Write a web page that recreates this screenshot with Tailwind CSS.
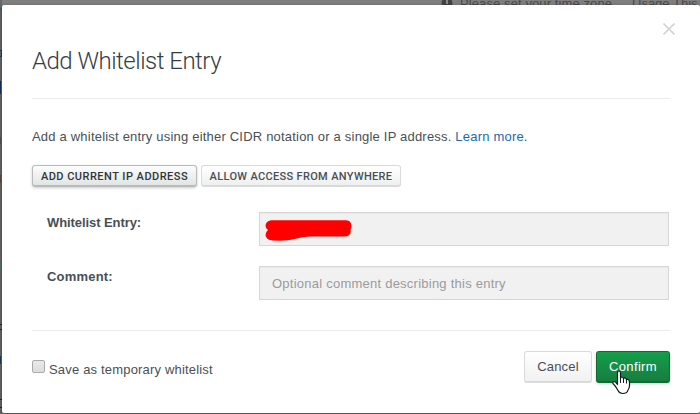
<!DOCTYPE html>
<html lang="en">
<head>
<meta charset="utf-8">
<title>Add Whitelist Entry</title>
<script src="https://cdn.jsdelivr.net/npm/@tailwindcss/browser@4"></script>
</head>
<body class="relative h-[414px] w-[700px] overflow-hidden bg-[#7e7e7e] pt-[5px] pl-[2px] font-['Liberation_Sans',Arial,sans-serif] text-[13px] text-[#494f54]">
  <!-- Dimmed page behind the dialog -->
  <div class="absolute top-0 left-0 h-[12px] w-[700px] text-[#494949]">
    <svg class="absolute top-[-2px] left-[441px]" width="12" height="10" viewBox="0 0 12 10"><circle cx="6" cy="5" r="5.500" fill="#424242"/><path d="M6 2v4" stroke="#888" stroke-width="2"/></svg>
    <span class="absolute top-[-4px] left-[460px] leading-[15px] whitespace-nowrap tracking-[0.1px]">Please set your time zone</span>
    <span class="absolute top-[-4px] left-[632px] leading-[15px] whitespace-nowrap">Usage This</span>
  </div>
  <div class="absolute top-0 left-0 h-[414px] w-[2px] overflow-hidden bg-[#666]">
    <i class="absolute top-[8px] left-0 h-[2px] w-[2px] bg-[#3b607c]"></i>
    <i class="absolute top-[50px] left-0 h-[7px] w-[2px] border border-l-0 border-[#17455f]"></i>
    <i class="absolute top-[81px] left-0 h-[13px] w-px bg-[#182f60]"></i>
    <i class="absolute top-[137px] left-0 h-[7px] w-px bg-[#57504c]"></i>
    <i class="absolute top-[175px] left-0 h-[8px] w-px bg-[#574a40]"></i>
    <i class="absolute top-[262px] left-0 h-[7px] w-px bg-[#58706d]"></i>
    <i class="absolute top-[324px] left-0 h-[6px] w-[2px] border-y border-[#17252c]"></i>
    <i class="absolute top-[356px] left-0 h-[8px] w-px bg-[#1d3a50]"></i>
    <i class="absolute top-[399px] left-0 h-[9px] w-[2px] border-y border-[#222]"></i>
  </div>

  <main class="relative flex h-[408px] w-[698px] flex-col rounded-[2px] bg-white px-[30px] shadow-[0_1px_3px_rgba(0,0,0,0.5)]">
    <button class="absolute top-[18px] right-[25px]" aria-label="Close">
      <svg width="12" height="12" viewBox="0 0 12 12" fill="none" stroke="#d4d4d4" stroke-width="1.600"><path d="M.5.5l11 11M11.500.5l-11 11"/></svg>
    </button>
    <header class="h-[94px] border-b border-[#ebebeb] pt-[41px]">
      <h1 class="font-['Roboto'] text-[24px] leading-[30px] font-light tracking-[-0.5px] whitespace-nowrap text-[#363d42]">Add Whitelist Entry</h1>
    </header>
    <p class="mt-[29px] h-[18px] leading-[18px] tracking-[0.2px] whitespace-nowrap">Add a whitelist entry using either CIDR notation or a single IP address. <a class="text-[#196bb0]">Learn more</a>.</p>
    <div class="mt-[19px] flex h-[22px] gap-1 font-['Roboto'] text-[11px] leading-[20px] font-medium whitespace-nowrap">
      <button class="w-[165px] rounded-[3px] border border-b-2 border-[#b7bcbb] bg-linear-to-b from-[#fcfdfd] to-[#e1e5e4] pt-px tracking-[0.48px] text-[#303538] shadow-[0_1px_3px_rgba(0,0,0,0.2)]">ADD CURRENT IP ADDRESS</button>
      <button class="w-[200px] rounded-[3px] border border-b-2 border-[#d8dbda] bg-linear-to-b from-white to-[#eef0ef] pt-px tracking-[0.33px] text-[#494f54]">ALLOW ACCESS FROM ANYWHERE</button>
    </div>
    <section class="mt-[25px] flex flex-col gap-5">
      <div class="flex h-[34px]">
        <label class="w-[227px] pl-[15px] leading-[22px] font-bold tracking-[-0.08px]">Whitelist Entry:</label>
        <div class="h-[34px] w-[410px] border border-[#d6d6d6] bg-[#f1f1f1] shadow-[inset_0_1px_1px_rgba(0,0,0,0.03)]">
          <svg class="mt-[7px] ml-[5px]" width="88" height="22" viewBox="0 0 88 22"><path d="M6 .2H80Q86 0 86.500 5.500Q86.500 8 85.500 9.500Q87 15 81 16.500H44Q37 17 27 19.600Q22 21 8 20.500Q1 20 .5 15Q.5 12 3 10Q.5 8.500.5 5.500Q1 1 6 .2Z" fill="#f00"/></svg>
        </div>
      </div>
      <div class="flex h-[34px]">
        <label class="w-[227px] pl-[15px] leading-[22px] font-bold tracking-[0.2px]">Comment:</label>
        <div class="h-[34px] w-[410px] border border-[#d6d6d6] bg-[#f1f1f1] pl-[12px] leading-[33px] tracking-[0.24px] whitespace-nowrap text-[#9b9b9b] shadow-[inset_0_1px_1px_rgba(0,0,0,0.03)]">Optional comment describing this entry</div>
      </div>
    </section>
    <footer class="mt-[30px] flex border-t border-[#ebebeb] pt-[20px]">
      <div class="mr-auto flex whitespace-nowrap">
        <span class="mt-[9px] h-[13px] w-[13px] rounded-[2px] border border-[#aaa] bg-linear-to-b from-[#e9e9e9] to-[#dcdcdc]"></span>
        <span class="mt-[9px] ml-[4px] leading-[20px] tracking-[0.18px]">Save as temporary whitelist</span>
      </div>
      <button class="h-[32px] w-[68px] rounded-[3px] border border-b-2 border-[#d8dbda] bg-linear-to-b from-white to-[#f1f1f1] text-[13px] tracking-[0.2px]">Cancel</button>
      <button class="ml-1 h-[32px] w-[74px] rounded-[3px] border border-b-2 border-[#116b34] bg-linear-to-b from-[#139e4b] to-[#177e3f] text-[13px] tracking-[0.35px] text-white shadow-[0_1px_3px_rgba(0,0,0,0.2)]">Confirm</button>
    </footer>
  </main>

  <!-- Hand pointer -->
  <svg class="absolute top-[370px] left-[612px]" width="19" height="25" viewBox="0 0 19 25"><path d="M5.500 14.500V3Q5.500 1 7 1T8.500 3V8.500Q8.700 7 10 7T11.500 9Q12 7.500 13.200 8T14.500 10Q15 9 16.200 9.500T17.500 12V15.500Q17.500 18 16 20Q15.500 23.500 10.500 23.500Q7.500 23.500 6 20.500Q4 16.500 1 13.500Q.5 11.500 2 11.500Q3.500 11.500 5.500 14.500Z" fill="#fff" stroke="#161a25" stroke-width="1.200" stroke-linejoin="round"/><path d="M8.500 8v5M11.500 9v4M14.500 10v3.500" fill="none" stroke="#161a25"/></svg>
</body>
</html>
